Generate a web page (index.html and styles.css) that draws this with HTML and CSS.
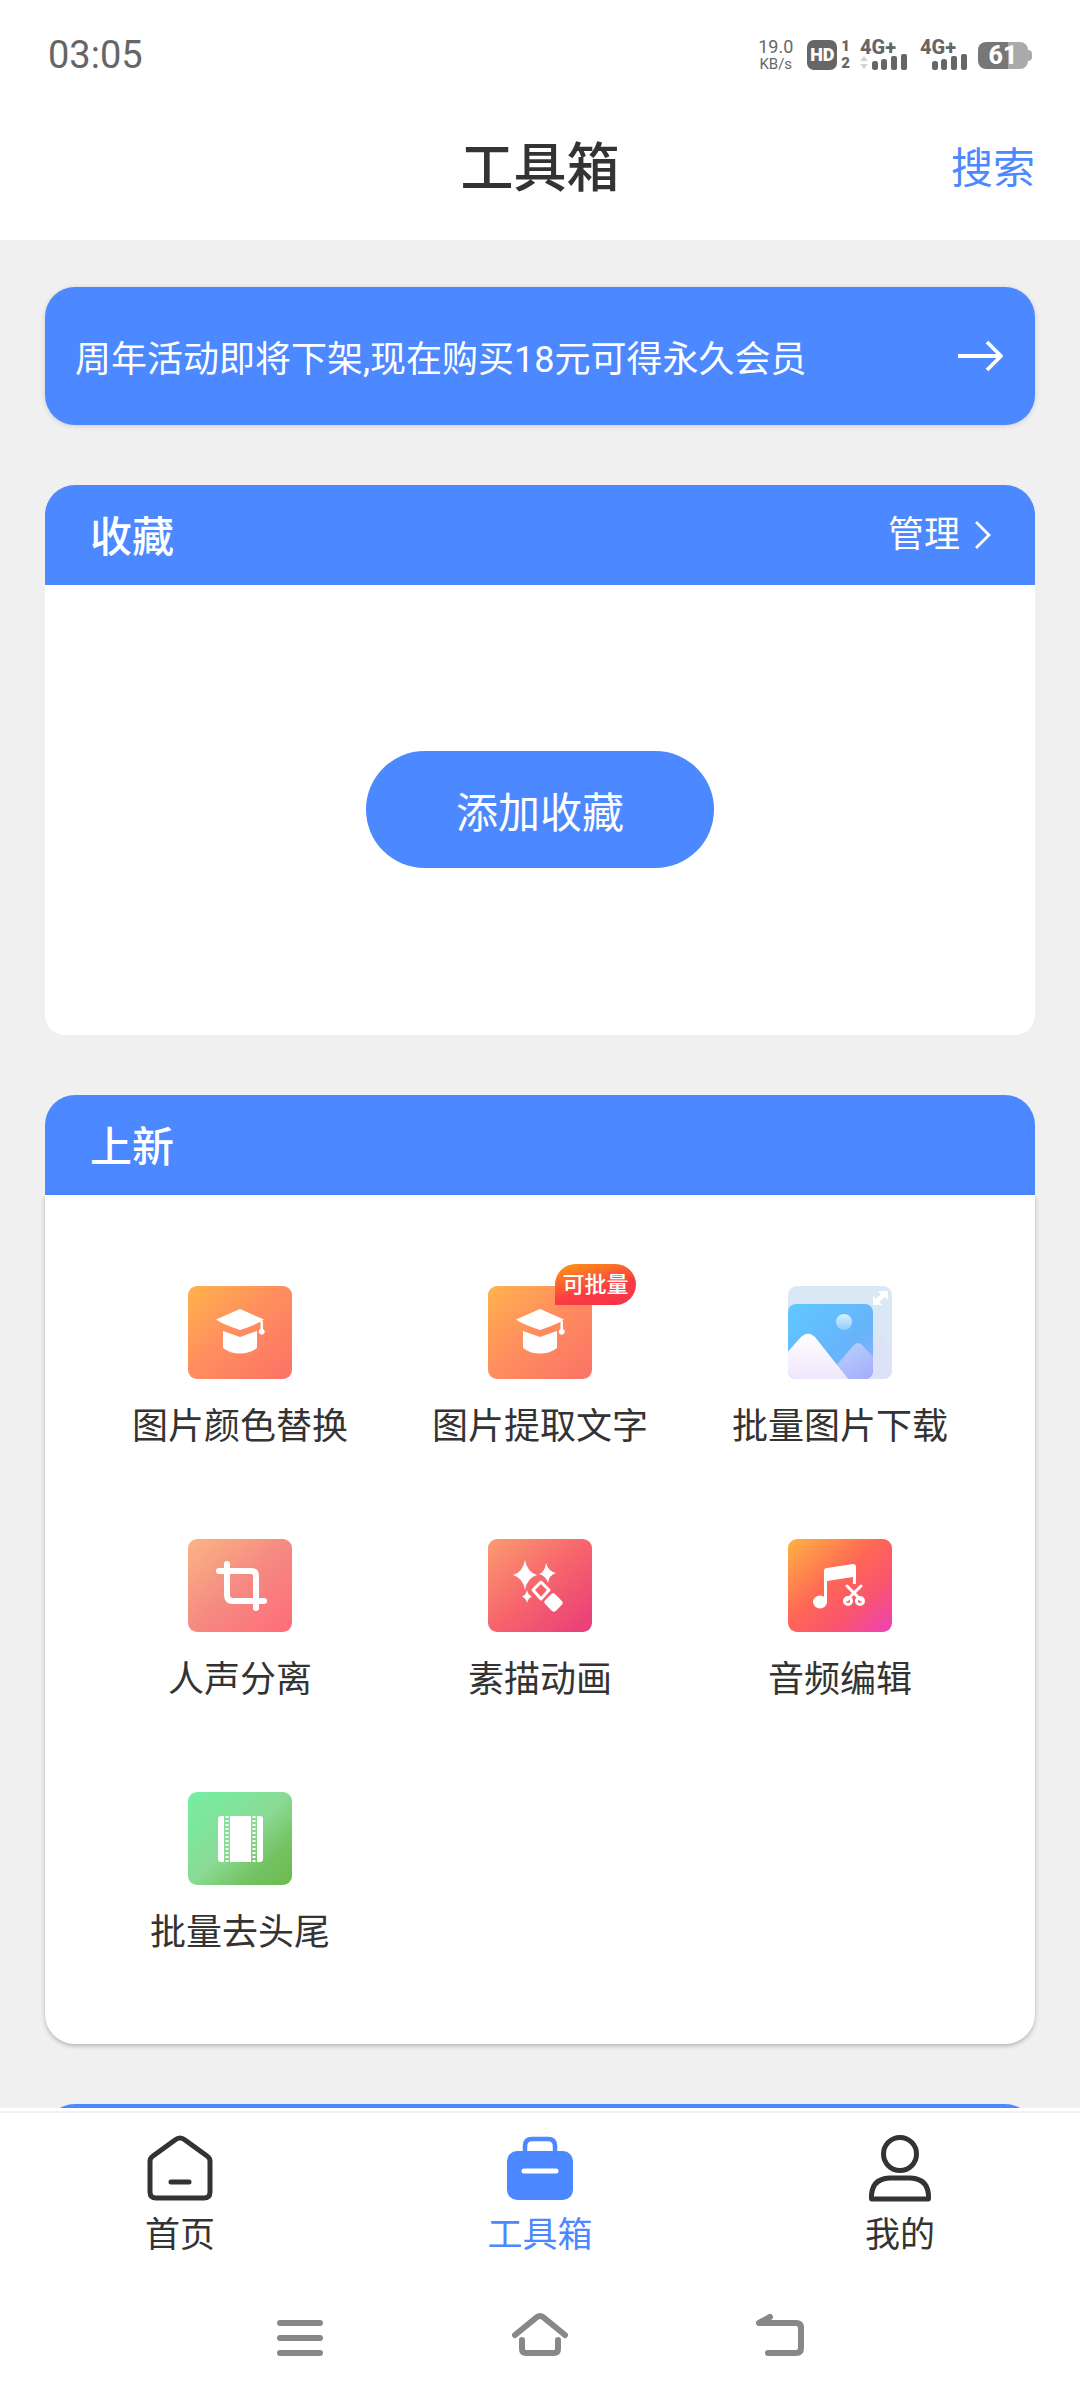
FILE: index.html
```html
<!DOCTYPE html>
<html lang="zh-CN">
<head>
<meta charset="utf-8">
<meta name="viewport" content="width=device-width">
<title>工具箱</title>
<link rel="stylesheet" href="styles.css">
</head>
<body>
<div class="app">
  <header class="top">
    <div class="status">
      <span class="clock">03:05</span>
      <div class="status-right">
        <div class="speed"><span class="speed-num">19.0</span><span class="speed-unit">KB/s</span></div>
        <div class="hd"><span class="hd-box">HD</span><span class="hd-sims"><span>1</span><span>2</span></span></div>
        <div class="signal">
          <span class="net">4G+</span>
          <svg class="bars" viewBox="0 0 48 16" aria-hidden="true"><path fill="#d4d4d4" d="M0 7l4-5 4 5zM0 10h8l-4 5z"/><g fill="#666"><rect x="12" y="7" width="6" height="9" rx="2.5"/><rect x="21" y="5" width="6" height="11" rx="2.5"/><rect x="31" y="2" width="6" height="14" rx="2"/><rect x="41" y="0" width="6" height="16" rx="2"/></g></svg>
        </div>
        <div class="signal">
          <span class="net">4G+</span>
          <svg class="bars" viewBox="0 0 48 16" aria-hidden="true"><g fill="#666"><rect x="12" y="7" width="6" height="9" rx="2.5"/><rect x="21" y="5" width="6" height="11" rx="2.5"/><rect x="31" y="2" width="6" height="14" rx="2"/><rect x="41" y="0" width="6" height="16" rx="2"/></g></svg>
        </div>
        <div class="battery"><span class="battery-level">61</span></div>
      </div>
    </div>
    <div class="titlebar">
      <h1 class="title">工具箱</h1>
      <a class="search" href="#search">搜索</a>
    </div>
  </header>

  <main class="content">
    <a class="banner" href="#vip">
      <span>周年活动即将下架,现在购买18元可得永久会员</span>
      <svg class="arrow" viewBox="0 0 46 32" aria-hidden="true"><path d="M1 16h42M30 2l14 14-14 14" fill="none" stroke="#fff" stroke-width="3.8" stroke-linejoin="round"/></svg>
    </a>

    <section class="card">
      <div class="card-head">
        <h2 class="card-title">收藏</h2>
        <a class="manage" href="#manage">管理
          <svg class="chevron" viewBox="0 0 18 28" aria-hidden="true"><path d="M2 1l13 13L2 27" fill="none" stroke="#fff" stroke-width="2.8"/></svg>
        </a>
      </div>
      <div class="favorites"><button class="add" type="button">添加收藏</button></div>
    </section>

    <section class="card">
      <div class="card-head"><h2 class="card-title">上新</h2></div>
      <div class="tools">
        <a class="tool" href="#color">
          <svg class="tool-icon" viewBox="0 0 104 93" aria-hidden="true">
            <defs>
              <linearGradient id="g-orange" x1="0" y1="0" x2="1" y2="1"><stop offset="0" stop-color="#ffb34d"/><stop offset=".45" stop-color="#ff8f5e"/><stop offset="1" stop-color="#fb7266"/></linearGradient>
              <g id="cap" fill="#fff"><path d="M52 23L76 33.500Q70 38 52 44Q34 38 28 33.500z"/><path d="M35 45l17 6 17-6v17q-7 5.500-17 5.500T35 62z"/><path d="M72.500 35h2.500v8a3 3 0 1 1-2.500 0z"/></g>
            </defs>
            <rect width="104" height="93" rx="9" fill="url(#g-orange)"/><use href="#cap"/>
          </svg>
          <span class="tool-name">图片颜色替换</span>
        </a>
        <a class="tool" href="#ocr">
          <svg class="tool-icon" viewBox="0 0 104 93" aria-hidden="true"><rect width="104" height="93" rx="9" fill="url(#g-orange)"/><use href="#cap"/></svg>
          <span class="badge">可批量</span>
          <span class="tool-name">图片提取文字</span>
        </a>
        <a class="tool" href="#download">
          <svg class="tool-icon" viewBox="0 0 104 93" aria-hidden="true">
            <defs>
              <linearGradient id="g-sky" x1="0" y1="0" x2="1" y2="1"><stop offset="0" stop-color="#60c9ff"/><stop offset=".6" stop-color="#66b4fa"/><stop offset="1" stop-color="#86b2ff"/></linearGradient>
              <linearGradient id="g-hill" x1="0" y1="0" x2="0" y2="1"><stop offset="0" stop-color="#fff"/><stop offset="1" stop-color="#f0e6fb"/></linearGradient>
              <linearGradient id="g-back" x1="0" y1="0" x2=".6" y2="1"><stop offset="0" stop-color="#b9d4fb"/><stop offset="1" stop-color="#a5adfd"/></linearGradient>
              <linearGradient id="g-moon" x1="0" y1="0" x2="0" y2="1"><stop offset="0" stop-color="#d9f1ff"/><stop offset="1" stop-color="#8fcdfb"/></linearGradient>
              <clipPath id="photo"><rect y="18" width="85" height="75" rx="8"/></clipPath>
            </defs>
            <rect width="104" height="93" rx="9" fill="#dae7f4"/>
            <path d="M85 54q7-7 10-2l9 12v21a8 8 0 0 1-8 8H82z" fill="#dce3f7"/>
            <g clip-path="url(#photo)">
              <rect y="18" width="85" height="75" fill="url(#g-sky)"/>
              <circle cx="56" cy="36" r="8" fill="url(#g-moon)"/>
              <path d="M48 80l17-20q5-6 10 0l14 15v22H56z" fill="url(#g-back)"/>
              <path d="M-4 70L13 51q7-7 14 0l34 43H-4z" fill="url(#g-hill)"/>
            </g>
            <path d="M90 5h10v9l-3-3-6 5 3 3h-9v-9l3 3 5-5z" fill="#fff"/>
          </svg>
          <span class="tool-name">批量图片下载</span>
        </a>
        <a class="tool" href="#vocal">
          <svg class="tool-icon" viewBox="0 0 104 93" aria-hidden="true">
            <defs><linearGradient id="g-peach" x1="0" y1="0" x2="1" y2="1"><stop offset="0" stop-color="#fab583"/><stop offset=".5" stop-color="#f58a82"/><stop offset="1" stop-color="#ff6b78"/></linearGradient></defs>
            <rect width="104" height="93" rx="9" fill="url(#g-peach)"/>
            <path d="M39 25v31q0 6 6 6h31M31 32h32q5 0 5 5v32" fill="none" stroke="#fff" stroke-width="6" stroke-linecap="round"/>
          </svg>
          <span class="tool-name">人声分离</span>
        </a>
        <a class="tool" href="#sketch">
          <svg class="tool-icon" viewBox="0 0 104 93" aria-hidden="true">
            <defs><linearGradient id="g-rose" x1="0" y1="0" x2="1" y2="1"><stop offset="0" stop-color="#fb9c70"/><stop offset=".5" stop-color="#f7646c"/><stop offset="1" stop-color="#e73c7a"/></linearGradient></defs>
            <rect width="104" height="93" rx="9" fill="url(#g-rose)"/>
            <g fill="#fff">
              <path d="M37 21q2 12 12 15-10 3-12 15-2-12-12-15 10-3 12-15z"/>
              <path d="M58 24q2 8 10 10-7 2-8 10-2-7-9-9 6-2 7-11z"/>
              <path d="M39 51q1 5 5 6.500-4 1.500-5 6.500-1-5-5-6.500 4-1.500 5-6.500z"/>
              <rect x="-7" y="-7.500" width="14" height="15" rx="3" transform="translate(65.500 63.500) rotate(-45)"/>
            </g>
            <path d="M53 43l8 8-8 9-8-9z" fill="none" stroke="#fff" stroke-width="3" stroke-linejoin="round"/>
          </svg>
          <span class="tool-name">素描动画</span>
        </a>
        <a class="tool" href="#audio">
          <svg class="tool-icon" viewBox="0 0 104 93" aria-hidden="true">
            <defs><linearGradient id="g-sunset" x1="0" y1="0" x2="1" y2="1"><stop offset="0" stop-color="#ffb242"/><stop offset=".45" stop-color="#ff6656"/><stop offset=".7" stop-color="#f9556e"/><stop offset="1" stop-color="#ec41b8"/></linearGradient></defs>
            <rect width="104" height="93" rx="9" fill="url(#g-sunset)"/>
            <g fill="#fff"><path d="M36 32q0-3 3-3l26-4q3 0 3 3v17h-3v-7l-26 4v22h-3z"/><ellipse cx="32" cy="63" rx="7" ry="6.500"/></g>
            <g fill="none" stroke="#fff" stroke-width="3"><path d="M59 47l14 14M73 47L59 61" stroke-linecap="round"/><circle cx="60" cy="62" r="3.500"/><circle cx="72" cy="62" r="3.500"/></g>
          </svg>
          <span class="tool-name">音频编辑</span>
        </a>
        <a class="tool" href="#trim">
          <svg class="tool-icon" viewBox="0 0 104 93" aria-hidden="true">
            <defs><linearGradient id="g-green" x1="0" y1="0" x2="1" y2="1"><stop offset="0" stop-color="#74efa4"/><stop offset=".5" stop-color="#8adb94"/><stop offset=".75" stop-color="#74c363"/><stop offset="1" stop-color="#6db94c"/></linearGradient></defs>
            <rect width="104" height="93" rx="9" fill="url(#g-green)"/>
            <g fill="#fff"><path d="M36 24v46h-3q-3 0-3-3V27q0-3 3-3zM42 24h21v46H42zM69 24h3q3 0 3 3v40q0 3-3 3h-3z"/></g>
            <path d="M39 24v46M66 24v46" stroke="#fff" stroke-width="3" stroke-dasharray="2 2"/>
          </svg>
          <span class="tool-name">批量去头尾</span>
        </a>
      </div>
    </section>

    <section class="card"><div class="card-head"></div></section>
  </main>

  <nav class="tabs">
    <a class="tab" href="#home">
      <svg class="tab-icon" viewBox="0 0 68 68" aria-hidden="true"><path d="M4 27q0-3 3-5L29 6q5-4 10 0l22 16q3 2 3 5v31q0 6-6 6H10q-6 0-6-6zM25 48h18" fill="none" stroke="#333" stroke-width="5" stroke-linecap="round"/></svg>
      <span>首页</span>
    </a>
    <a class="tab tab-active" href="#tools" aria-current="page">
      <svg class="tab-icon" viewBox="0 0 68 68" aria-hidden="true"><path d="M19 20v-8q0-7 7-7h16q7 0 7 7v8" fill="none" stroke="#4c88ff" stroke-width="4.500"/><rect x="1" y="17" width="66" height="49" rx="10" fill="#4c88ff"/><path d="M18 37h32" stroke="#fff" stroke-width="5" stroke-linecap="round"/></svg>
      <span>工具箱</span>
    </a>
    <a class="tab" href="#me">
      <svg class="tab-icon" viewBox="0 0 68 68" aria-hidden="true"><g fill="none" stroke="#333" stroke-width="5"><circle cx="34" cy="20" r="16.500"/><path d="M5.500 65q-1-20 18-21h21q19 1 18 21z" stroke-linejoin="round"/></g></svg>
      <span>我的</span>
    </a>
  </nav>

  <div class="sysnav">
    <button class="sys" type="button" aria-label="最近任务"><svg class="sys-icon" viewBox="0 0 60 48" aria-hidden="true"><path d="M10 14h40M10 29h40M10 44h40"/></svg></button>
    <button class="sys" type="button" aria-label="主屏幕"><svg class="sys-icon" viewBox="0 0 60 48" aria-hidden="true"><path d="M5 26L27 8q3-2 6 0l22 18M12 31v9q0 4 4 4h28q4 0 4-4v-9"/></svg></button>
    <button class="sys" type="button" aria-label="返回"><svg class="sys-icon" viewBox="0 0 60 48" aria-hidden="true"><path d="M20 8L9 14h37q5 0 5 5v20q0 5-5 5H18"/></svg></button>
  </div>
</div>
</body>
</html>
```
FILE: styles.css
```css
* { box-sizing: border-box; }

body {
  margin: 0;
  color: #333;
  font-family: Roboto, "Noto Sans CJK SC", sans-serif;
}

a { color: inherit; text-decoration: none; }
h1, h2 { margin: 0; font-weight: 500; }
button { border: 0; padding: 0; font-family: inherit; }
svg { display: block; flex: none; }

.app {
  display: flex;
  flex-direction: column;
  height: 100vh;
  background: #f0f0f0;
}

/* Status bar and page title */
.top { flex: none; background: #fff; }

.status {
  display: flex;
  align-items: center;
  justify-content: space-between;
  height: 98px;
  padding: 12px 48px 0;
  color: #666;
}

.clock { font-size: 38px; }
.status-right { display: flex; align-items: center; }

.speed {
  display: flex;
  flex-direction: column;
  align-items: center;
  margin-right: 14px;
}
.speed-num { font-size: 18px; line-height: 18px; }
.speed-unit { font-size: 15px; line-height: 16px; }

.hd { display: flex; align-items: center; gap: 4px; margin-right: 10px; }
.hd-box {
  width: 30px;
  height: 30px;
  border-radius: 7px;
  background: #666;
  color: #fff;
  font-size: 18px;
  font-weight: 900;
  line-height: 30px;
  text-align: center;
}
.hd-sims {
  display: flex;
  flex-direction: column;
  font-size: 15px;
  font-weight: 900;
  line-height: 17px;
}

.signal {
  display: flex;
  flex-direction: column;
  width: 48px;
  margin-right: 12px;
}
.signal + .signal { margin-right: 10px; }
.net { font-size: 20px; font-weight: 800; line-height: 14px; }
.bars { width: 48px; height: 16px; }

.battery {
  position: relative;
  width: 50px;
  height: 27px;
  margin-right: 4px;
  border-radius: 8px;
  background: linear-gradient(to right, #777 61%, #aaa 61%);
  color: #fff;
  font-size: 25px;
  font-weight: 800;
  line-height: 28px;
  text-align: center;
}
.battery::after {
  content: "";
  position: absolute;
  top: 8px;
  right: -4px;
  width: 4px;
  height: 11px;
  border-radius: 0 4px 4px 0;
  background: #aaa;
}

.titlebar {
  display: grid;
  grid-template-columns: 1fr auto 1fr;
  align-items: center;
  height: 142px;
  padding: 0 45px;
}
.title { grid-column: 2; font-size: 53px; line-height: 64px; }
.search { justify-self: end; color: #4c88ff; font-size: 42px; line-height: 52px; }

/* Scrolling area */
.content {
  display: flex;
  flex: 1;
  flex-direction: column;
  gap: 60px;
  min-height: 0;
  padding: 47px 45px 0;
  overflow: hidden;
}

.banner {
  display: flex;
  flex: none;
  align-items: center;
  justify-content: space-between;
  height: 138px;
  padding: 0 32px 0 30px;
  border-radius: 30px;
  background: #4c88ff;
  box-shadow: 0 1px 5px rgba(0, 0, 0, .15);
  color: #fff;
  font-size: 36px;
}
.arrow { width: 46px; height: 32px; }

.card { flex: none; }
.card-head {
  display: flex;
  align-items: center;
  justify-content: space-between;
  height: 100px;
  padding: 0 43px 0 45px;
  border-radius: 30px 30px 0 0;
  background: #4c88ff;
  color: #fff;
}
.card-title { padding-top: 5px; font-size: 42px; line-height: 52px; }
.manage { display: flex; align-items: center; gap: 14px; font-size: 36px; line-height: 48px; }
.chevron { width: 18px; height: 28px; }

.favorites {
  display: flex;
  align-items: center;
  justify-content: center;
  height: 450px;
  padding-bottom: 2px;
  border-radius: 0 0 20px 20px;
  background: #fff;
}
.add {
  width: 348px;
  height: 117px;
  border-radius: 59px;
  background: #4c88ff;
  color: #fff;
  font-size: 42px;
}

.tools {
  display: grid;
  grid-template-columns: repeat(3, 1fr);
  row-gap: 88px;
  padding: 91px 45px 87px;
  border-radius: 0 0 30px 30px;
  background: #fff;
  box-shadow: 0 2px 4px rgba(0, 0, 0, .25);
}
.tool {
  position: relative;
  display: flex;
  flex-direction: column;
  align-items: center;
  gap: 24px;
}
.tool-icon { width: 104px; height: 93px; }
.tool-name { font-size: 36px; line-height: 48px; }

.badge {
  position: absolute;
  top: -22px;
  left: calc(50% + 15px);
  width: 81px;
  height: 41px;
  border-radius: 21px 21px 21px 0;
  background: linear-gradient(165deg, #ff9a12, #f93c44 60%, #f53347);
  color: #fff;
  font-size: 22px;
  font-weight: 500;
  line-height: 42px;
  text-align: center;
}

/* App tabs */
.tabs {
  display: grid;
  flex: none;
  grid-template-columns: repeat(3, 1fr);
  padding: 23px 0 28px;
  border-top: 3px solid #fff;
  background: #fff;
  box-shadow: inset 0 2px #f2f2f2;
}
.tab {
  display: flex;
  flex-direction: column;
  align-items: center;
  gap: 10px;
  font-size: 35px;
  line-height: 48px;
}
.tab-icon { width: 68px; height: 68px; }
.tab-active { color: #4c88ff; }

/* System navigation */
.sysnav {
  display: flex;
  flex: none;
  align-items: center;
  justify-content: center;
  gap: 180px;
  height: 112px;
  padding-bottom: 23px;
  background: #fff;
}
.sys { width: 60px; background: none; }
.sys-icon {
  width: 60px;
  height: 48px;
  fill: none;
  stroke: #888;
  stroke-width: 6;
  stroke-linecap: round;
  stroke-linejoin: round;
}
```
